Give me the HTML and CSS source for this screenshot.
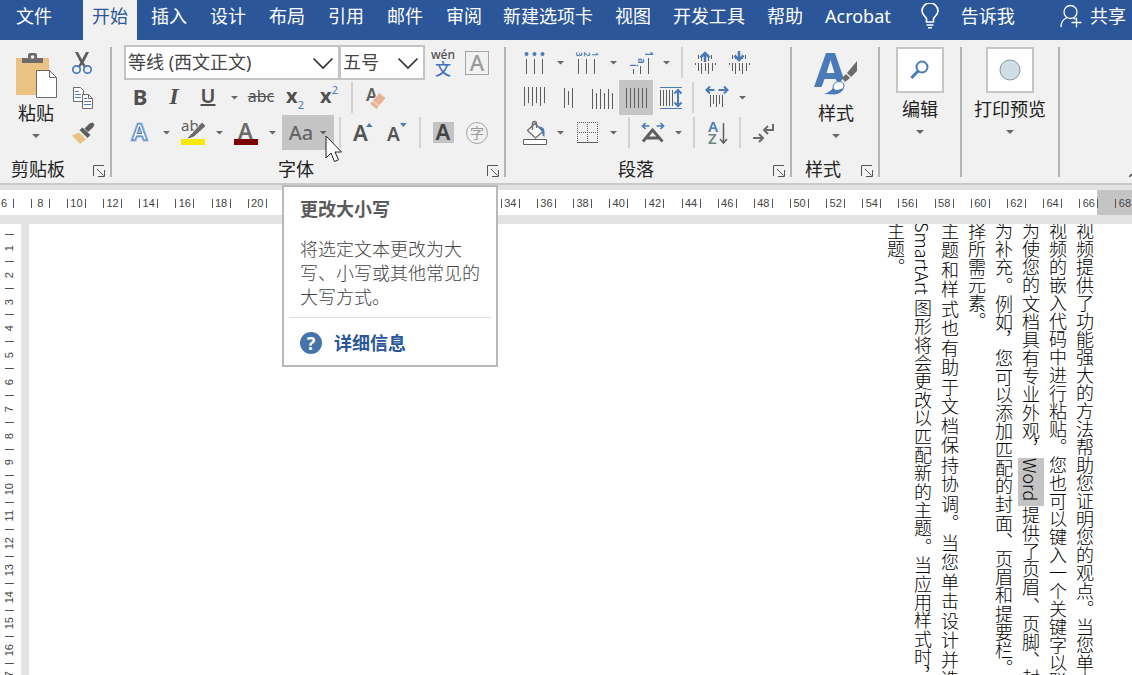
FILE: index.html
```html
<!DOCTYPE html>
<html lang="zh-CN">
<head>
    <meta charset="UTF-8">
    <meta name="viewport" content="width=device-width, initial-scale=1.0">
    <title>Word</title>
    <link rel="stylesheet" href="styles.css">
</head>
<body>
    <header class="tabbar">
        <button class="tab tab-file">文件</button>
        <nav class="tabs">
            <button class="tab active">开始</button>
            <button class="tab">插入</button>
            <button class="tab">设计</button>
            <button class="tab">布局</button>
            <button class="tab">引用</button>
            <button class="tab">邮件</button>
            <button class="tab">审阅</button>
        </nav>
        <nav class="tabs tabs-more">
            <button class="tab">新建选项卡</button>
            <button class="tab">视图</button>
            <button class="tab">开发工具</button>
            <button class="tab">帮助</button>
            <button class="tab">Acrobat</button>
        </nav>
        <button class="tab tab-tell">
            <svg width="22" height="26" viewBox="0 0 22 26" fill="none" stroke="#fff" stroke-width="1.6"><path d="M7.5 19v-3.5C6 13 3 11.500 3 8a8 8 0 0 1 16 0c0 3.500-3 5-4.500 7.500V19z"/><path d="M7.500 22h7M9 24.800h4"/></svg>
            告诉我
        </button>
        <button class="tab tab-share">
            <svg width="22" height="24" viewBox="0 0 22 24" fill="none" stroke="#fff" stroke-width="1.300"><circle cx="10.500" cy="8" r="6.500"/><path d="M1 23c0-5 2.500-8 6-9.500M13.500 14l2 1.500M16.500 13.500v10M11.500 18.500h10"/></svg>
            共享
        </button>
    </header>

    <section class="ribbon">
        <!-- 剪贴板 -->
        <div class="group group-clipboard">
            <div class="group-body">
                <button class="big">
                    <svg class="big-icon" width="44" height="48" viewBox="0 0 44 48"><path fill="#eac282" d="M2 7h33v37H2z"/><path fill="#6b6b6b" d="M8 12V7h6V4q0-2 2-2h5q2 0 2 2v3h6v5z"/><circle cx="18.500" cy="6" r="1.800" fill="#f1f1f1"/><path fill="#fff" stroke="#6b6b6b" d="M22.500 19.500h13l7 7v20h-20z"/><path fill="none" stroke="#6b6b6b" d="M35.500 19.500v7h7"/></svg>
                    <span class="big-label">粘贴</span>
                    <i class="caret"></i>
                </button>
                <div class="stack">
                    <button class="tool" aria-label="剪切"><svg width="34" height="34" viewBox="0 0 34 34"><path fill="#5e5e5e" d="M10 6l3 0 4 7.500L21 6h3l-5.300 10.500 2.300 4-2.300.5-1.700-2.500-1.800 2.500-2.200-.5 2.300-4z"/><g fill="none" stroke="#4a7ab8" stroke-width="1.700"><circle cx="11.500" cy="23.500" r="3.700"/><circle cx="22.500" cy="23.500" r="3.700"/></g></svg></button>
                    <button class="tool" aria-label="复制"><svg width="34" height="34" viewBox="0 0 34 34"><path fill="#fff" stroke="#6b6b6b" d="M8.500 6.500h7l3 3v11h-10z"/><path stroke="#4a7ab8" d="M10 10.500h4M10 13.500h6M10 16.500h6"/><path fill="#fff" stroke="#6b6b6b" d="M17.500 13.500h6l4 4v10h-10z"/><path fill="none" stroke="#6b6b6b" d="M23.500 13.500v4h4"/><path stroke="#4a7ab8" d="M19 17.500h3M19 20.500h7M19 23.500h7"/></svg></button>
                    <button class="tool" aria-label="格式刷"><svg width="34" height="34" viewBox="0 0 34 34"><path fill="#eac282" d="M7 19.500l7-3 7 7-6 4.500z"/><path fill="#5e5e5e" d="M14.500 14l3-2.500 8 7.500-3 3zM19.500 12.500l5-5 3-1 2 2-1.500 3-5 4.500z"/></svg></button>
                </div>
            </div>
            <div class="group-foot"><span>剪贴板</span><button class="launcher" aria-label="剪贴板选项"><svg width="12" height="12" viewBox="0 0 12 12" fill="none" stroke="#555"><path d="M.5 11V.5H11M4 4l6.500 6.500M11.500 5v6.500H5"/></svg></button></div>
        </div>
        <div class="rule"></div>

        <!-- 字体 -->
        <div class="group group-rows">
            <div class="group-body rows">
                <div class="row">
                    <label class="combo combo-font"><select aria-label="字体"><option>等线 (西文正文)</option></select><svg width="22" height="13" viewBox="0 0 22 13" fill="none" stroke="#333" stroke-width="1.700"><path d="M1.500 1.500L11 11l9.500-9.500"/></svg></label>
                    <label class="combo combo-size"><select aria-label="字号"><option>五号</option></select><svg width="22" height="13" viewBox="0 0 22 13" fill="none" stroke="#333" stroke-width="1.700"><path d="M1.500 1.500L11 11l9.500-9.500"/></svg></label>
                    <button class="tool pinyin"><span>wén</span><b>文</b></button>
                    <button class="tool"><span class="boxed">A</span></button>
                </div>
                <div class="row">
                    <button class="tool glyph"><b>B</b></button>
                    <button class="tool glyph italic">I</button>
                    <button class="tool glyph underline">U</button>
                    <button class="drop" aria-label="下划线样式"><i class="caret"></i></button>
                    <button class="tool strike">abc</button>
                    <button class="tool script"><b>x</b><sub>2</sub></button>
                    <button class="tool script"><b>x</b><sup>2</sup></button>
                    <span class="sep"></span>
                    <button class="tool" aria-label="清除格式"><svg width="34" height="34" viewBox="0 0 34 34"><text class="t-icon" x="8" y="20" font-size="17" fill="#5e5e5e">A</text><path fill="#e9b295" stroke="#f1f1f1" d="M21.500 11.500l6.500 5.500-9.500 11.500-7-5.500z"/><path stroke="#f1f1f1" d="M14 19.500l7 5.500"/></svg></button>
                </div>
                <div class="row">
                    <button class="tool" aria-label="文本效果"><svg width="34" height="34" viewBox="0 0 34 34"><text class="t-icon" x="9" y="24" font-size="22" fill="#fff" stroke="#a9c3e6" stroke-width="3" paint-order="stroke">A</text><text class="t-icon" x="9" y="24" font-size="22" fill="#fff" stroke="#4a7ab8" stroke-width="1">A</text></svg></button>
                    <button class="drop" aria-label="文本效果选项"><i class="caret"></i></button>
                    <button class="tool" aria-label="突出显示"><svg width="34" height="34" viewBox="0 0 34 34"><text class="t-plain" x="5" y="15" font-size="15" fill="#5e5e5e">ab</text><path fill="#6b6b6b" stroke="#f1f1f1" d="M26 6l4 4-12 11-4 1.500-4 .5 5-5z"/><path fill="#f5e90a" d="M5 23h24v6H5z"/></svg></button>
                    <button class="drop" aria-label="突出显示颜色"><i class="caret"></i></button>
                    <button class="tool" aria-label="字体颜色"><svg width="34" height="34" viewBox="0 0 34 34"><text class="t-icon" x="9" y="23" font-size="22" fill="#6b6b6b">A</text><path fill="#7a0006" d="M5 23h24v6H5z"/></svg></button>
                    <button class="drop" aria-label="字体颜色选项"><i class="caret"></i></button>
                    <div class="case">
                        <button class="case-button">Aa<i class="caret"></i></button>
                        <svg class="cursor" width="18" height="28" viewBox="0 0 18 28"><path fill="#fff" stroke="#222" d="M1 1v22l5-5 3.500 8.500 4-1.700L10 17h6.500z"/></svg>
                        <div class="tooltip">
                            <h2>更改大小写</h2>
                            <p>将选定文本更改为大写、小写或其他常见的大写方式。</p>
                            <a href="#"><span class="help">?</span>详细信息</a>
                        </div>
                    </div>
                    <span class="sep"></span>
                    <button class="tool" aria-label="增大字号"><svg width="34" height="34" viewBox="0 0 34 34"><text class="t-icon" x="7" y="25" font-size="22" fill="#555">A</text><path fill="#4a7ab8" d="M20 11l3.300-4 3.300 4z"/></svg></button>
                    <button class="tool" aria-label="减小字号"><svg width="34" height="34" viewBox="0 0 34 34"><text class="t-icon" x="7" y="25" font-size="19" fill="#555">A</text><path fill="#4a7ab8" d="M20 7l3.300 4 3.300-4z"/></svg></button>
                    <span class="sep"></span>
                    <button class="tool"><span class="shaded">A</span></button>
                    <button class="tool"><span class="circled">字</span></button>
                </div>
            </div>
            <div class="group-foot"><span>字体</span><button class="launcher" aria-label="字体选项"><svg width="12" height="12" viewBox="0 0 12 12" fill="none" stroke="#555"><path d="M.5 11V.5H11M4 4l6.500 6.500M11.500 5v6.500H5"/></svg></button></div>
        </div>
        <div class="rule"></div>

        <!-- 段落 -->
        <div class="group group-rows">
            <div class="group-body rows">
                <div class="row">
                    <button class="tool" aria-label="项目符号"><svg width="34" height="34" viewBox="0 0 34 34"><g fill="#4a7ab8"><circle cx="9.500" cy="8" r="2"/><circle cx="17.500" cy="8" r="2"/><circle cx="25.500" cy="8" r="2"/></g><path stroke="#5e5e5e" d="M9.500 13v15M17.500 13v15M25.500 13v15"/></svg></button>
                    <button class="drop" aria-label="项目符号库"><i class="caret"></i></button>
                    <button class="tool" aria-label="编号"><svg width="34" height="34" viewBox="0 0 34 34"><g class="t-icon" font-size="8" fill="#4a7ab8"><text transform="translate(6 6) rotate(90)">3</text><text transform="translate(14 6) rotate(90)">2</text><text transform="translate(22 6) rotate(90)">1</text></g><path stroke="#5e5e5e" d="M8.500 13v15M16.500 13v15M24.500 13v15"/></svg></button>
                    <button class="drop" aria-label="编号库"><i class="caret"></i></button>
                    <button class="tool" aria-label="多级列表"><svg width="34" height="34" viewBox="0 0 34 34"><g class="t-icon" font-size="10" fill="#4a7ab8"><text transform="translate(22 5) rotate(90)">1</text><text transform="translate(15 12) rotate(90)">a</text><text transform="translate(7 18) rotate(90)">i</text></g><path stroke="#5e5e5e" d="M25.500 12v16M17.500 20v8M10.500 23v5"/></svg></button>
                    <button class="drop" aria-label="多级列表库"><i class="caret"></i></button>
                    <span class="sep"></span>
                    <button class="tool" aria-label="减少缩进量"><svg width="34" height="34" viewBox="0 0 34 34"><path stroke="#5e5e5e" d="M10.500 9v4M13.500 9v4M20.500 9v4M23.500 9v4M7.500 17v2M10.500 17v8M13.500 17v11M17.500 17v8M20.500 17v11M24.500 17v8M27.500 17v2M13.500 13v2M20.500 13v2"/><path fill="none" stroke="#4a7ab8" stroke-width="2.500" d="M17 16V7M12.500 11.500L17 7l4.500 4.500"/></svg></button>
                    <button class="tool" aria-label="增加缩进量"><svg width="34" height="34" viewBox="0 0 34 34"><path stroke="#5e5e5e" d="M10.500 9v4M13.500 9v4M20.500 9v4M23.500 9v4M7.500 17v2M10.500 17v8M13.500 17v11M17.500 17v8M20.500 17v11M24.500 17v8M27.500 17v2"/><path fill="none" stroke="#4a7ab8" stroke-width="2.500" d="M17 5v9M12.500 9.500L17 14l4.500-4.500"/></svg></button>
                </div>
                <div class="row">
                    <button class="tool" aria-label="顶端对齐"><svg width="34" height="34" viewBox="0 0 34 34" stroke="#5e5e5e"><path d="M7.500 6v19M11.500 6v16M15.500 6v19M19.500 6v16M23.500 6v19M27.500 6v16"/></svg></button>
                    <button class="tool" aria-label="居中"><svg width="34" height="34" viewBox="0 0 34 34" stroke="#5e5e5e"><path d="M13.500 7v20M17.500 10v14M21.500 7v20"/></svg></button>
                    <button class="tool" aria-label="底端对齐"><svg width="34" height="34" viewBox="0 0 34 34" stroke="#5e5e5e"><path d="M7.500 8v20M11.500 12v16M15.500 8v20M19.500 12v16M23.500 8v20M27.500 12v16"/></svg></button>
                    <button class="tool pressed" aria-label="两端对齐"><svg width="34" height="34" viewBox="0 0 34 34" stroke="#5e5e5e"><path d="M7.500 7v20M11.500 7v20M15.500 7v20M19.500 7v20M23.500 7v20M27.500 7v20"/></svg></button>
                    <button class="tool" aria-label="分散对齐"><svg width="34" height="34" viewBox="0 0 34 34" fill="none"><path stroke="#5e5e5e" d="M7.500 9v16M10.500 9v16M13.500 9v16M16.500 9v16M19.500 9v16"/><path stroke="#4a7ab8" d="M7 6.500h22M7 27.500h22"/><path stroke="#4a7ab8" stroke-width="2" d="M25 9v16M21.500 12.500L25 9l3.500 3.500M21.500 21.500L25 25l3.500-3.500"/></svg></button>
                    <span class="sep"></span>
                    <button class="tool" aria-label="行距"><svg width="34" height="34" viewBox="0 0 34 34" fill="none"><path stroke="#5e5e5e" d="M11.500 14v12M14.500 14v9M17.500 14v12M20.500 14v9M23.500 14v12"/><path stroke="#4a7ab8" stroke-width="2" d="M7.500 9h8M11 5.500L7.500 9l3.500 3.500M19.500 9h9M25 5.500L28.500 9 25 12.500"/></svg></button>
                    <button class="drop" aria-label="行距选项"><i class="caret"></i></button>
                </div>
                <div class="row">
                    <button class="tool" aria-label="底纹"><svg width="34" height="34" viewBox="0 0 34 34" fill="none"><path fill="#fff" stroke="#5e5e5e" d="M6.500 23.500h23v5h-23z"/><path fill="#fff" stroke="#6b6b6b" stroke-width="1.300" d="M10.500 14.500l7.500-7 8 8-7.500 6.500z"/><path stroke="#6b6b6b" stroke-width="1.300" d="M15.500 14V7.500q0-2 2-2t2 2V12"/><path fill="#4a7ab8" d="M22 10.500q5.500.5 5.500 5v5.500l-1.800-1.500-.7-3.500z"/></svg></button>
                    <button class="drop" aria-label="底纹颜色"><i class="caret"></i></button>
                    <button class="tool" aria-label="边框"><svg width="34" height="34" viewBox="0 0 34 34" stroke="#5e5e5e"><path stroke-dasharray="1 1" d="M7 6.500h21M7 16.500h21M7.500 6v20M17.500 6v20M27.500 6v20"/><path d="M7 26.500h21"/></svg></button>
                    <button class="drop" aria-label="边框选项"><i class="caret"></i></button>
                    <span class="sep"></span>
                    <button class="tool" aria-label="中文版式"><svg width="34" height="34" viewBox="0 0 34 34" fill="none"><path stroke="#5e5e5e" stroke-width="2.800" d="M8 25.500L17.500 14l10 11.500M12 22h11.500"/><path stroke="#4a7ab8" stroke-width="1.700" d="M7.500 10h7M10.500 7l-3 3 3 3M21.500 10h7M25.500 7l3 3-3 3"/></svg></button>
                    <button class="drop" aria-label="中文版式选项"><i class="caret"></i></button>
                    <span class="sep"></span>
                    <button class="tool" aria-label="排序"><svg width="34" height="34" viewBox="0 0 34 34"><text class="t-icon" x="8" y="16" font-size="15" fill="#4a7ab8">A</text><text class="t-icon" x="8" y="28" font-size="15" fill="#6b8680">Z</text><path fill="none" stroke="#5e5e5e" stroke-width="1.500" d="M23.500 7v20M20 23l3.500 4 3.500-4"/></svg></button>
                    <span class="sep"></span>
                    <button class="tool" aria-label="显示编辑标记"><svg width="34" height="34" viewBox="0 0 34 34" fill="none" stroke="#6b6b6b" stroke-width="2"><path d="M27 8v6h-9M22 10l-4 4 4 4M7 22h10M13 18l4 4-4 4"/></svg></button>
                </div>
            </div>
            <div class="group-foot"><span>段落</span><button class="launcher" aria-label="段落选项"><svg width="12" height="12" viewBox="0 0 12 12" fill="none" stroke="#555"><path d="M.5 11V.5H11M4 4l6.500 6.500M11.500 5v6.500H5"/></svg></button></div>
        </div>
        <div class="rule"></div>

        <!-- 样式 -->
        <div class="group group-styles">
            <div class="group-body">
                <button class="big">
                    <svg class="big-icon" width="44" height="48" viewBox="0 0 44 48"><path fill="#4a7ab8" fill-rule="evenodd" d="M0 36L12 2h9l8.500 25-5 6-3-5H10.500L7.500 36zM12.500 22h8L16.500 9z"/><path fill="#6b6b6b" d="M28 27l4-4 4 4-5 4zM33 22l10-12v10l-6 6z"/><path fill="#fff" stroke="#4a7ab8" d="M19 37q0-6 6-6.500 5 0 5 4.500-1 7-9 7z"/><path fill="#4a7ab8" d="M10 43q6-2 9-6 3 3 6 1.500 2-1 4.500-1Q27 43 20 43.500z"/></svg>
                    <span class="big-label">样式</span>
                    <i class="caret"></i>
                </button>
            </div>
            <div class="group-foot"><span>样式</span><button class="launcher" aria-label="样式选项"><svg width="12" height="12" viewBox="0 0 12 12" fill="none" stroke="#555"><path d="M.5 11V.5H11M4 4l6.500 6.500M11.500 5v6.500H5"/></svg></button></div>
        </div>
        <div class="rule"></div>

        <div class="group group-boxed">
            <button class="big">
                <span class="big-box"><svg width="22" height="22" viewBox="0 0 22 22" fill="none" stroke="#4a7ab8"><circle cx="13" cy="8" r="5.500" stroke-width="2"/><path stroke-width="3" d="M9 12l-6.500 7"/></svg></span>
                <span class="big-label">编辑</span>
                <i class="caret"></i>
            </button>
        </div>
        <div class="rule"></div>

        <div class="group group-boxed">
            <button class="big">
                <span class="big-box"><svg width="24" height="24" viewBox="0 0 24 24"><circle cx="12" cy="12" r="10" fill="#cfdee6" stroke="#8a9499"/></svg></span>
                <span class="big-label">打印预览</span>
                <i class="caret"></i>
            </button>
        </div>
        <div class="rule"></div>
        <button class="collapse" aria-label="折叠功能区"><svg width="3" height="4" viewBox="0 0 3 4" fill="none" stroke="#444" stroke-width="1.500"><path d="M0 4l3-3"/></svg></button>
    </section>

    <div class="ruler-h" id="rulerH"></div>

    <main class="workspace">
        <div class="ruler-v" id="rulerV"></div>
        <div class="page">
            <article>
                <p>视频提供了功能强大的方法帮助您证明您的观点。当您单击联机视频时，可以在想要添加的视频的嵌入代码中进行粘贴。您也可以键入一个关键字以联机搜索最适合您的文档的视频。为使您的文档具有专业外观，<mark>Word </mark>提供了页眉、页脚、封面和文本框设计，这些设计可互为补充。例如，您可以添加匹配的封面、页眉和提要栏。单击“插入”，然后从不同库中选择所需元素。</p>
                <p>主题和样式也有助于文档保持协调。当您单击设计并选择新的主题时，图片、图表或 SmartArt 图形将会更改以匹配新的主题。当应用样式时，您的标题会进行更改以匹配新的主题。</p>
            </article>
        </div>
    </main>

    <script>
        // 水平标尺：每两个字符一个刻度
        const rulerH = document.getElementById('rulerH');
        for (let i = 6; i <= 68; i += 2) {
            rulerH.innerHTML += '<div class="mark-h"><span>' + i + '</span></div>';
        }

        // 垂直标尺
        const rulerV = document.getElementById('rulerV');
        for (let i = 1; i <= 17; i++) {
            rulerV.innerHTML += '<div class="mark-v"><span>' + i + '</span></div>';
        }
    </script>
</body>
</html>
```

FILE: styles.css
```css
* {
    box-sizing: border-box;
}
body {
    margin: 0;
    height: 100vh;
    display: flex;
    flex-direction: column;
    overflow: hidden;
    font-family: "Noto Sans", "Noto Sans CJK SC", sans-serif;
    font-size: 18px;
    line-height: 24px;
    color: #222;
    background-color: #e3e3e3;
}
button {
    font: inherit;
    color: inherit;
    padding: 0;
    border: none;
    background: none;
    cursor: pointer;
}
svg {
    display: block;
    flex: none;
}

/* Tabs */
.tabbar {
    display: flex;
    flex: none;
    height: 40px;
    background-color: #2b579a;
    color: white;
}
.tabs {
    display: flex;
    gap: 5px;
}
.tabs-more {
    gap: 4px;
    margin-left: 3px;
}
.tab {
    display: flex;
    align-items: center;
    padding: 0 9px 8px;
    white-space: nowrap;
}
.tab.active {
    background-color: #f1f1f1;
    color: #2b579a;
}
.tab-file {
    padding: 0 31px 8px 16px;
}
.tab-tell {
    gap: 20px;
    margin-left: 10px;
}
.tab-share {
    gap: 8px;
    margin-left: auto;
    padding-right: 6px;
}

/* Ribbon */
.ribbon {
    display: flex;
    flex: none;
    padding: 5px 0 2px;
    background-color: #f1f1f1;
    border-bottom: 2px solid #c9c9c9;
}
.rule {
    width: 2px;
    margin: 2px 0 4px;
    background-color: #b6b6b6;
}
.group {
    display: flex;
    flex-direction: column;
}
.group-body {
    display: flex;
    height: 105px;
}
.rows,
.stack {
    flex-direction: column;
}
.group-rows .rows {
    padding: 0 10px 0 11px;
}
.group-clipboard .group-body {
    padding: 0 11px 0 7px;
}
.group-clipboard .big {
    width: 58px;
}
.group-styles .group-body {
    justify-content: center;
    padding: 0 20px 0 22px;
}
.group-boxed {
    padding: 2px 12px 0;
    min-width: 80px;
}
.group-foot {
    display: flex;
    align-items: center;
    margin-top: 7px;
    padding-right: 5px;
}
.group-foot span {
    flex: 1;
    text-align: center;
}
.group-clipboard .group-foot span {
    padding-right: 10px;
}
.launcher {
    padding: 4px 0 0 7px;
}
.collapse {
    align-self: flex-end;
    margin-left: auto;
    padding-bottom: 4px;
}
.row {
    display: flex;
    height: 35px;
}
.tool {
    display: flex;
    align-items: center;
    justify-content: center;
    width: 34px;
    height: 35px;
    color: #505050;
}
.tool.pressed {
    background-color: #c5c5c5;
}
.drop {
    display: flex;
    align-items: center;
    justify-content: center;
    width: 19px;
}
.sep {
    width: 2px;
    margin: 2px 5px;
    background-color: #d2d2d2;
}
.caret {
    width: 8px;
    height: 4px;
    background-color: #666;
    clip-path: polygon(0 0, 100% 0, 50% 100%);
}

/* Large buttons */
.big {
    display: flex;
    flex-direction: column;
    align-items: center;
}
.big-icon {
    margin: 6px 0 2px;
}
.big-label {
    margin-bottom: 9px;
    white-space: nowrap;
}
.big-box {
    display: flex;
    align-items: center;
    justify-content: center;
    width: 48px;
    height: 46px;
    margin-bottom: 4px;
    background-color: white;
    border: 2px solid #c5c5c5;
}

/* Font group */
.combo {
    position: relative;
    height: 35px;
}
.combo-font {
    width: 217px;
    padding-left: 1px;
}
.combo-size {
    width: 86px;
    margin-left: -1px;
    margin-right: 1px;
}
.combo select {
    width: 100%;
    height: 35px;
    padding: 0 2px 2px;
    font: inherit;
    color: #444;
    background-color: white;
    border: 2px solid #c3c3c3;
    border-radius: 0;
    appearance: none;
}
.combo svg {
    position: absolute;
    right: 6px;
    top: 12px;
    pointer-events: none;
}
.pinyin {
    flex-direction: column;
    font-size: 12px;
    font-weight: 500;
    line-height: 12px;
}
.pinyin b {
    font-size: 16px;
    font-weight: 500;
    line-height: 16px;
    color: #4472b8;
}
.boxed {
    width: 24px;
    height: 24px;
    border: 1px solid #a5a5a5;
    font-size: 22px;
    line-height: 20px;
    font-weight: 500;
    color: #999;
}
.shaded {
    width: 21px;
    height: 21px;
    font-size: 22px;
    line-height: 19px;
    font-weight: 600;
    color: #444;
    background-color: #c3c3c3;
}
.circled {
    width: 22px;
    height: 22px;
    border: 1px solid #a5a5a5;
    border-radius: 50%;
    font-size: 14px;
    line-height: 19px;
    color: #999;
}
.glyph,
.strike,
.script {
    padding-bottom: 4px;
}
.glyph {
    font-size: 22px;
}
.italic {
    font-family: "Liberation Serif", serif;
    font-style: italic;
    font-weight: bold;
    font-size: 24px;
}
.underline {
    text-decoration: underline;
    text-decoration-thickness: 2px;
    font-weight: 600;
    font-size: 20px;
}
.strike {
    font-size: 16px;
    text-decoration: line-through;
}
.script {
    font-size: 20px;
}
.script sub,
.script sup {
    font-size: 11px;
    line-height: 12px;
    color: #4a7ab8;
}
.script sub {
    align-self: flex-end;
}
.script sup {
    align-self: flex-start;
    padding-top: 4px;
}
.t-icon {
    font-family: "Noto Sans", sans-serif;
    font-weight: 600;
}
.t-plain {
    font-family: "Noto Sans", sans-serif;
}

/* Change case button with its tooltip */
.case {
    position: relative;
}
.case-button {
    display: flex;
    align-items: center;
    justify-content: center;
    gap: 6px;
    width: 52px;
    height: 35px;
    font-size: 20px;
    font-weight: 500;
    color: #666;
    background-color: #c5c5c5;
}
.cursor {
    position: absolute;
    left: 43px;
    top: 20px;
    z-index: 2;
}
.tooltip {
    position: absolute;
    left: 0;
    top: 70px;
    z-index: 1;
    width: 216px;
    padding: 10px 5px;
    background-color: white;
    border: 2px solid #b9b9b9;
    color: #5a5a5a;
}
.tooltip h2 {
    margin: 0 11px 15px;
    font-size: 18px;
    line-height: 24px;
}
.tooltip p {
    margin: 0;
    padding: 0 11px 9px;
    border-bottom: 1px solid #dedede;
    font-family: "Noto Sans CJK SC", sans-serif;
    font-weight: 300;
    color: #444;
}
.tooltip a {
    display: flex;
    align-items: center;
    gap: 12px;
    margin: 13px 11px 0;
    color: #2b579a;
    font-weight: bold;
    text-decoration: none;
}
.help {
    width: 22px;
    height: 22px;
    border-radius: 50%;
    background-color: #4573ab;
    color: white;
    line-height: 22px;
    text-align: center;
}

/* Rulers */
.ruler-h {
    display: flex;
    flex: none;
    height: 25px;
    margin: 5px 0 9px;
    padding-top: 2px;
    overflow: hidden;
    background: linear-gradient(to left, #c4c4c4 35px, white 35px);
    font-family: "Liberation Sans", sans-serif;
    font-size: 11px;
    line-height: 9px;
    color: #444;
}
.mark-h {
    flex: 1;
    display: flex;
    align-items: center;
    justify-content: center;
}
.mark-h:first-child {
    margin-left: -14px;
}
.mark-h:last-child {
    margin-right: -11px;
}
.mark-h span {
    width: 19px;
    border: solid #555;
    border-width: 0 1px;
    text-align: center;
}
.workspace {
    display: flex;
    flex: 1;
    min-height: 0;
}
.ruler-v {
    display: flex;
    flex-direction: column;
    width: 21px;
    margin: 0 8px -15px 0;
    padding: 10px 7px 0 5px;
    background-color: white;
    font-family: "Liberation Sans", sans-serif;
    font-size: 11px;
    line-height: 9px;
    color: #444;
}
.mark-v {
    flex: 1;
    display: flex;
    align-items: center;
    justify-content: center;
    border-top: 1px solid #555;
}
.mark-v span {
    writing-mode: vertical-rl;
    transform: rotate(180deg);
}

/* Document */
.page {
    display: flex;
    flex: 1;
    justify-content: flex-end;
    align-items: flex-start;
    padding-right: 34px;
    overflow: hidden;
    background-color: white;
}
article {
    flex: none;
    height: 720px;
    margin-top: -2px;
    writing-mode: vertical-rl;
    font-family: "Noto Sans CJK SC", sans-serif;
    font-weight: 300;
    line-height: 27px;
    text-align: justify;
    color: black;
}
article p {
    margin: 0;
}
mark {
    color: inherit;
    background-color: #c4c4c4;
}
```
